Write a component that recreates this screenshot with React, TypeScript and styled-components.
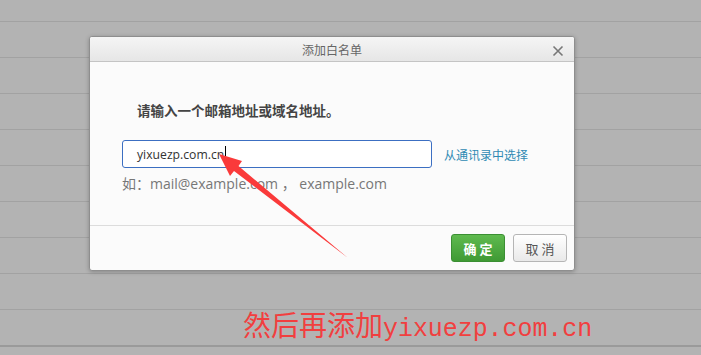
import React from 'react';
import styled, { createGlobalStyle } from 'styled-components';

const GlobalStyle = createGlobalStyle`
  html, body {
    margin: 0;
    padding: 0;
    background: #b3b3b3;
    font-family: "Open Sans", "Noto Sans CJK SC", sans-serif;
    overflow: hidden;
  }
`;

const Page = styled.div`
  position: relative;
  width: 701px;
  height: 355px;
  overflow: hidden;
`;

const Row = styled.div<{ $first?: boolean; $last?: boolean }>`
  height: ${(p) => (p.$first ? 21 : 35)}px;
  border-bottom: ${(p) => (p.$last ? '2px solid #9a9a9a' : '1px solid #a2a2a2')};
`;

const Dialog = styled.div`
  position: absolute;
  left: 89px;
  top: 36px;
  width: 484px;
  height: 233px;
  border: 1px solid #8e8e8e;
  border-radius: 3px;
  background: #fbfbfb;
  box-shadow: 0 1px 4px rgba(0, 0, 0, 0.25);
  display: flex;
  flex-direction: column;
  overflow: hidden;
`;

const Header = styled.div`
  height: 24px;
  border-bottom: 1px solid #c4c4c4;
  background: linear-gradient(#f5f5f5, #e6e6e6);
  display: flex;
  align-items: center;
  justify-content: center;
  position: relative;
`;

const Title = styled.span`
  font-size: 12px;
  color: #666;
  font-family: "Noto Sans CJK SC", sans-serif;
`;

const Close = styled.span`
  position: absolute;
  right: 9px;
  top: 4px;
  width: 14px;
  height: 14px;
`;

const Body = styled.div`
  flex: 1;
  padding: 38px 0 0 32px;
  border-bottom: 1px solid #dcdcdc;
`;

const Prompt = styled.div`
  font-family: "Noto Sans CJK SC", sans-serif;
  font-weight: bold;
  font-size: 13.5px;
  line-height: 20px;
  color: #444;
  padding-left: 15px;
`;

const InputRow = styled.div`
  display: flex;
  align-items: center;
  gap: 12px;
  margin-top: 20px;
`;

const InputBox = styled.div`
  width: 294px;
  height: 26px;
  border: 1px solid #3c6fc2;
  border-radius: 3px;
  background: #fff;
  padding-left: 14px;
  display: flex;
  align-items: center;
  font-size: 12.2px;
  color: #333;
`;

const Caret = styled.span`
  display: inline-block;
  width: 1px;
  height: 17px;
  background: #000;
  margin-left: 1px;
`;

const Link = styled.span`
  font-family: "Noto Sans CJK SC", sans-serif;
  font-size: 12px;
  color: #2f8ab3;
`;

const Hint = styled.div`
  margin-top: 6px;
  font-size: 14px;
  line-height: 20px;
  color: #777;
`;

const Footer = styled.div`
  height: 44px;
  display: flex;
  align-items: center;
  justify-content: flex-end;
  gap: 8px;
  padding-right: 7px;
`;

const Button = styled.button<{ $primary?: boolean }>`
  width: 54px;
  height: 28px;
  border-radius: 3px;
  font-family: "Noto Sans CJK SC", sans-serif;
  font-size: 13px;
  letter-spacing: 3px;
  text-indent: 3px;
  padding: 0;
  border: 1px solid ${(p) => (p.$primary ? '#3b8f33' : '#b5b5b5')};
  background: ${(p) =>
    p.$primary ? 'linear-gradient(#5fba4f, #3f9a34)' : 'linear-gradient(#ffffff, #e9e9e9)'};
  color: ${(p) => (p.$primary ? '#fff' : '#555')};
  font-weight: ${(p) => (p.$primary ? 'bold' : 'normal')};
`;

const Arrow = styled.svg`
  position: absolute;
  left: 0;
  top: 0;
  pointer-events: none;
`;

const Annotation = styled.div`
  position: absolute;
  left: 243px;
  top: 305px;
  color: #f13f3f;
  font-family: "Noto Sans CJK SC", serif;
  font-size: 28px;
  line-height: 38px;
  white-space: nowrap;
`;

const Mono = styled.span`
  font-family: "Liberation Mono", monospace;
  font-size: 24.9px;
`;

export default function App() {
  const rows = Array.from({ length: 10 });
  return (
    <Page>
      <GlobalStyle />
      {rows.map((_, i) => (
        <Row key={i} $first={i === 0} $last={i === rows.length - 1} />
      ))}
      <Dialog>
        <Header>
          <Title>添加白名单</Title>
          <Close>
            <svg width="14" height="14" viewBox="0 0 14 14">
              <path d="M2.5 2.5 L11.5 11.5 M11.5 2.5 L2.5 11.5" stroke="#777" strokeWidth="1.6" />
            </svg>
          </Close>
        </Header>
        <Body>
          <Prompt>请输入一个邮箱地址或域名地址。</Prompt>
          <InputRow>
            <InputBox>
              yixuezp.com.cn
              <Caret />
            </InputBox>
            <Link>从通讯录中选择</Link>
          </InputRow>
          <Hint>如：mail@example.com ， example.com</Hint>
        </Body>
        <Footer>
          <Button $primary>确定</Button>
          <Button>取消</Button>
        </Footer>
      </Dialog>
      <Arrow width="701" height="355">
        <polygon
          points="219,154 242,161 238.5,166 348,258 234,171 230,176"
          fill="#fa3a3a"
        />
      </Arrow>
      <Annotation>
        然后再添加<Mono>yixuezp.com.cn</Mono>
      </Annotation>
    </Page>
  );
}
